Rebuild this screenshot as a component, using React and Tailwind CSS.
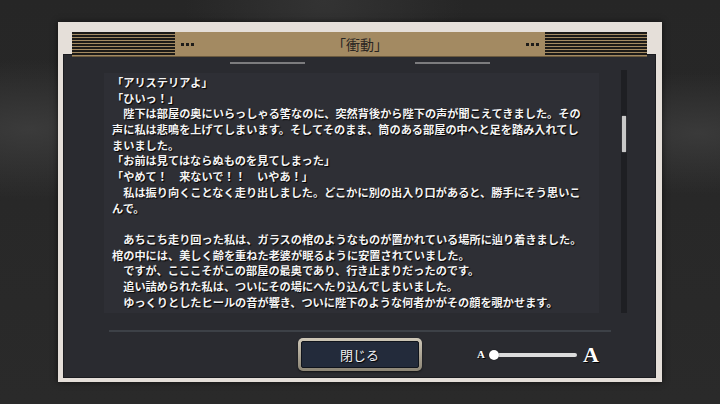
import React from 'react';

const lines = [
  { text: '「アリステリアよ」' },
  { text: '「ひいっ！」' },
  { text: '陛下は部屋の奥にいらっしゃる筈なのに、突然背後から陛下の声が聞こえてきました。その', indent: true },
  { text: '声に私は悲鳴を上げてしまいます。そしてそのまま、筒のある部屋の中へと足を踏み入れてし' },
  { text: 'まいました。' },
  { text: '「お前は見てはならぬものを見てしまった」' },
  { text: '「やめて！　来ないで！！　いやあ！」' },
  { text: '私は振り向くことなく走り出しました。どこかに別の出入り口があると、勝手にそう思いこ', indent: true },
  { text: 'んで。' },
  { text: '' },
  { text: 'あちこち走り回った私は、ガラスの棺のようなものが置かれている場所に辿り着きました。', indent: true },
  { text: '棺の中には、美しく齢を重ねた老婆が眠るように安置されていました。' },
  { text: 'ですが、こここそがこの部屋の最奥であり、行き止まりだったのです。', indent: true },
  { text: '追い詰められた私は、ついにその場にへたり込んでしまいました。', indent: true },
  { text: 'ゆっくりとしたヒールの音が響き、ついに陛下のような何者かがその顔を覗かせます。', indent: true },
];

const Stripes = ({ width }) => (
  <div
    className={`${width} h-full bg-[repeating-linear-gradient(to_bottom,#1d1b18_0px,#1d1b18_2px,#a38a62_2px,#a38a62_3px)]`}
  />
);

const Dots = () => (
  <div className="flex items-center gap-[2px]">
    <span className="w-[3px] h-[3px] bg-[#1f1d1a]" />
    <span className="w-[3px] h-[3px] bg-[#1f1d1a]" />
    <span className="w-[3px] h-[3px] bg-[#1f1d1a]" />
  </div>
);

export default function App() {
  return (
    <div
      className="w-[720px] h-[404px] overflow-hidden pt-[22px] pl-[58px] bg-[radial-gradient(ellipse_at_4%_32%,#3b3b3b_0%,transparent_18%),radial-gradient(ellipse_at_97%_33%,#3a3a3a_0%,transparent_16%),radial-gradient(ellipse_at_45%_0%,#333_0%,transparent_25%),linear-gradient(#262626,#2a2a2a)]"
      style={{ fontFamily: '"Noto Sans CJK JP", "Noto Sans", sans-serif' }}
    >
      <div className="w-[604px] h-[360px] flex flex-col bg-[#e5dfd9] pt-[10px] pl-[5px] pr-[6px] pb-[4px] shadow-[0_0_6px_rgba(0,0,0,0.6)]">
        {/* title bar */}
        <div className="relative z-10 mx-[9px] h-[24px] -mb-[2px] flex items-center bg-[#a38a62] shadow-[0_1px_0_#6b5a3e]">
          <Stripes width="w-[103px]" />
          <div className="ml-[6px]">
            <Dots />
          </div>
          <div className="flex-1 text-center text-[14px] leading-none text-[#2a2622]">「衝動」</div>
          <div className="mr-[6px]">
            <Dots />
          </div>
          <Stripes width="w-[102px]" />
        </div>

        {/* panel */}
        <div className="flex-1 flex flex-col bg-[#2a2b30] border border-[#1b1c20] pt-[7px] pb-[6px]">
          <div className="flex justify-center gap-[110px]">
            <div className="w-[75px] h-[2px] bg-[#7c7c7e]" />
            <div className="w-[75px] h-[2px] bg-[#7c7c7e]" />
          </div>

          <div className="mt-[6px] flex items-end">
            <div className="ml-[40px] w-[495px] h-[240px] overflow-hidden bg-[#2e2f35] pl-[8px] pt-[2px]">
              {lines.map((line, i) => (
                <div
                  key={i}
                  className="h-[15.7px] leading-[15.7px] whitespace-nowrap text-[11.2px] font-bold text-[#f4f4f4] [text-shadow:1px_1px_1px_#000]"
                >
                  {line.indent ? '　' : ''}
                  {line.text}
                </div>
              ))}
            </div>
            <div className="ml-[22px] w-[6px] h-[243px] bg-[#1e1f23] pt-[46px]">
              <div className="mx-auto w-[4px] h-[36px] bg-[#c8c8c8] rounded-[1px] shadow-[0_0_1px_#fff]" />
            </div>
          </div>

          <div className="mt-[17px] mx-auto w-[502px] h-[2px] bg-[#3d4147]" />

          <div className="mt-[6px] grid grid-cols-3 items-center">
            <div />
            <div className="justify-self-center w-[124px] h-[33px] p-[3px] rounded-[5px] bg-[linear-gradient(#cfc8b8,#8c8575)] shadow-[0_1px_2px_rgba(0,0,0,0.6)]">
              <div className="w-full h-full flex items-center justify-center rounded-[2px] bg-[#232b3b] border border-[#10141c] text-[13px] text-[#f2f2f2] [text-shadow:1px_1px_1px_#000]">
                閉じる
              </div>
            </div>
            <div
              className="flex items-center pl-[19px]"
              style={{ fontFamily: '"Liberation Serif", serif' }}
            >
              <span className="w-[10px] text-[11px] leading-none font-bold text-white [text-shadow:1px_1px_0_#000]">A</span>
              <div className="ml-[2px] w-[88px] flex items-center">
                <div className="relative z-10 w-[10px] h-[10px] rounded-full bg-white shadow-[0_0_1px_#000]" />
                <div className="-ml-[5px] flex-1 h-[4px] rounded-full bg-[#dcdcdc]" />
              </div>
              <span className="ml-[6px] text-[22px] leading-none font-bold text-white [text-shadow:1px_1px_0_#000]">A</span>
            </div>
          </div>
        </div>
      </div>
    </div>
  );
}
